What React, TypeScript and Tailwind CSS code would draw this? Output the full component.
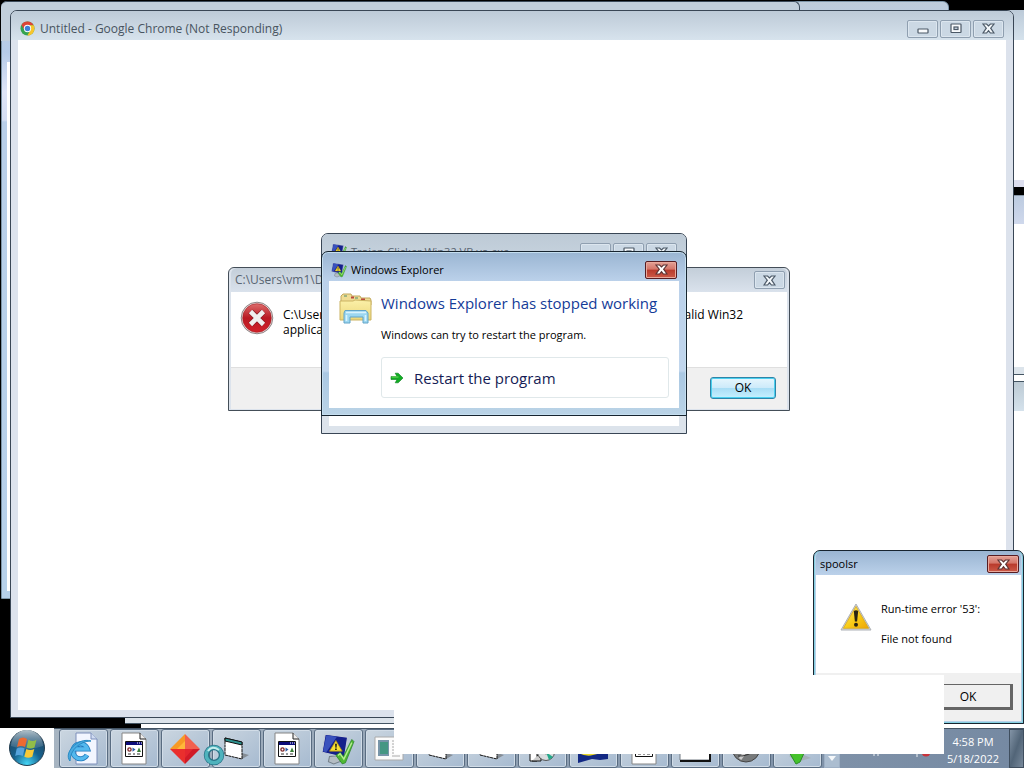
import type { ReactNode } from "react";

function CloseGlyph({ light = false }: { light?: boolean }) {
  return (
    <svg width="13" height="11" viewBox="0 0 13 11" aria-hidden="true">
      <path
        d="M1 1h3.6l1.9 2 1.9-2H12L8.7 5.2 12 10H8.4L6.5 7.6 4.6 10H1l3.3-4.8z"
        fill={light ? "#fff" : "#f4f8fb"}
        stroke={light ? "#5e3434" : "#4b5866"}
        strokeWidth="1.2"
      />
    </svg>
  );
}

function MinimizeGlyph() {
  return (
    <svg width="12" height="11" viewBox="0 0 12 11" aria-hidden="true">
      <rect x="1" y="6" width="10" height="4" rx="0.5" fill="#f8fafc" stroke="#4b5866" strokeWidth="1.2" />
    </svg>
  );
}

function MaximizeGlyph() {
  return (
    <svg width="12" height="11" viewBox="0 0 12 11" aria-hidden="true">
      <rect x="1" y="1" width="10" height="8.5" rx="0.5" fill="#f8fafc" stroke="#4b5866" strokeWidth="1.2" />
      <rect x="4" y="4" width="4" height="2.5" fill="#cbd8e4" stroke="#4b5866" strokeWidth="1.2" />
    </svg>
  );
}

function CaptionButton({ label, children }: { label: string; children: ReactNode }) {
  return (
    <button
      aria-label={label}
      className="flex h-[18px] w-[31px] items-center justify-center rounded-[2px] border border-[#8f9fb0] bg-[#cbd8e4] shadow-[inset_0_0_0_1px_#dce6ef]"
    >
      {children}
    </button>
  );
}

function RedCloseButton() {
  return (
    <button
      aria-label="Close"
      className="flex h-[18px] w-[32px] items-center justify-center rounded-[2px] border border-[#571d22] bg-[linear-gradient(#e3a196_0%,#d47568_45%,#b83a2c_50%,#cd5a48_100%)] shadow-[inset_0_0_0_1px_#e9a99c]"
    >
      <CloseGlyph light />
    </button>
  );
}

function ChromeIcon() {
  return (
    <svg width="15" height="15" viewBox="0 0 16 16" aria-hidden="true">
      <circle cx="8" cy="8" r="7.5" fill="#35a352" />
      <path d="M1.5 4.2A7.5 7.5 0 0 1 14.6 4.5H8L5 9.8z" fill="#dc4437" />
      <path d="M14.6 4.5A7.5 7.5 0 0 1 7.8 15.5L11.2 9.7 10 4.5z" fill="#f7c52d" />
      <circle cx="8" cy="8" r="3.9" fill="#fff" />
      <circle cx="8" cy="8" r="2.9" fill="#3f7fd9" />
    </svg>
  );
}

function MonitorCheckIcon({ size = 16 }: { size?: number }) {
  return (
    <svg width={size} height={size} viewBox="0 0 32 32" aria-hidden="true">
      <path d="M8 23l10-1 2 5-8 3-5-2z" fill="#b4bdc4" stroke="#75808a" />
      <path d="M4 2l21 3-3 19L1 19z" fill="#14208c" stroke="#c3ccd8" />
      <path d="M5 3l10 1.5L5 19l-3-1z" fill="#3a52bd" />
      <path d="M14 8l6 10H8z" fill="#f9df31" stroke="#a78518" strokeWidth="0.7" />
      <path d="M13.3 11h1.6l-.3 3.8h-1zM13.3 15.6h1.5V17h-1.5z" fill="#111" />
      <path d="M14 22l4-3 3 4 8-16 2 2-8 20-3 1z" fill="#4fb833" stroke="#29802a" strokeWidth="0.7" />
      <path d="M16 22l2-1.5 3.5 5L29 10" fill="none" stroke="#b5ec93" strokeWidth="1.3" />
    </svg>
  );
}

function ErrorIcon() {
  return (
    <svg className="shrink-0" width="34" height="34" viewBox="0 0 34 34" aria-hidden="true">
      <defs>
        <linearGradient id="errorRed" x1="0" y1="0" x2="0" y2="1">
          <stop offset="0" stopColor="#dd6d6c" />
          <stop offset="0.5" stopColor="#b91922" />
          <stop offset="1" stopColor="#d2222a" />
        </linearGradient>
      </defs>
      <circle cx="17" cy="17" r="15.8" fill="#ead7d7" stroke="#827b7c" strokeWidth="0.9" />
      <circle cx="17" cy="17" r="14.3" fill="url(#errorRed)" stroke="#a41b22" strokeWidth="0.6" />
      <path d="M10.5 10.5l13 13M23.5 10.5l-13 13" stroke="#851820" strokeWidth="6" />
      <path d="M10.5 10.5l13 13M23.5 10.5l-13 13" stroke="#f0f0ee" strokeWidth="4.6" />
    </svg>
  );
}

function WarningIcon() {
  return (
    <svg className="shrink-0" width="32" height="29" viewBox="0 0 32 29" aria-hidden="true">
      <defs>
        <linearGradient id="warningYellow" x1="0" y1="0" x2="1" y2="1">
          <stop offset="0" stopColor="#fff178" />
          <stop offset="0.55" stopColor="#f8cb15" />
          <stop offset="1" stopColor="#eda407" />
        </linearGradient>
      </defs>
      <path d="M16 1L31 27H1z" fill="#d6d8d9" stroke="#aeb2b7" strokeLinejoin="round" />
      <path d="M16 3.4L28.7 25.3H3.3z" fill="url(#warningYellow)" stroke="#d7a618" strokeWidth="0.8" />
      <path d="M13.8 8q2.2-1.6 4.4 0L17.1 18.5h-2.2z" fill="#282413" />
      <circle cx="16" cy="21.8" r="2" fill="#282413" />
    </svg>
  );
}

function FolderIcon() {
  return (
    <svg className="shrink-0" width="34" height="32" viewBox="0 0 34 32" aria-hidden="true">
      <defs>
        <linearGradient id="folder" x1="0" y1="0" x2="0" y2="1">
          <stop offset="0" stopColor="#fbf0a8" />
          <stop offset="1" stopColor="#ecd77a" />
        </linearGradient>
      </defs>
      <path d="M2 3l2-2h8l1 2h8l1 2h9l1 2v5H2z" fill="#efdc94" stroke="#c1a85c" />
      <path d="M12 4.5h3M22 6.5h4" stroke="#ba473c" strokeWidth="2" />
      <path d="M5 3h3M16 5h3" stroke="#4f8d6b" />
      <path d="M1 8h13l2-1 16 1v19H1z" fill="url(#folder)" stroke="#cbb362" />
      <path d="M6 17.5h21l2 2.5v10h-5v-6H11v6H5V20z" fill="#9cd7f0" stroke="#62a4c8" />
      <path d="M7 19.5h20M7.5 22v6M26.5 22v6" stroke="#daf3fd" strokeWidth="1.6" />
    </svg>
  );
}

function ArrowIcon() {
  return (
    <svg width="14" height="12" viewBox="0 0 14 12" aria-hidden="true">
      <path d="M1 4.5h6L5.2 1.2h3L13 6l-4.8 4.8h-3L7 7.5H1z" fill="#12ad24" stroke="#087f1d" strokeWidth="0.6" />
      <path d="M1.5 5h7" stroke="#72e05c" />
    </svg>
  );
}

function StartOrb() {
  return (
    <svg width="38" height="38" viewBox="0 0 38 38" aria-hidden="true">
      <defs>
        <radialGradient id="orb" cx="0.5" cy="0.95" r="0.9">
          <stop offset="0" stopColor="#45d5f5" />
          <stop offset="0.45" stopColor="#16628f" />
          <stop offset="1" stopColor="#23445f" />
        </radialGradient>
        <linearGradient id="gloss" x1="0" y1="0" x2="0" y2="1">
          <stop offset="0" stopColor="#d6e3e9" stopOpacity="0.8" />
          <stop offset="1" stopColor="#7797ad" stopOpacity="0.25" />
        </linearGradient>
      </defs>
      <circle cx="19" cy="19" r="17.5" fill="url(#orb)" stroke="#243e50" />
      <path d="M3 17a16 16 0 0 1 32 0q-16 6-32 0" fill="url(#gloss)" />
      <path d="M11 10q4-3 8 0l-2 8q-4-2-8 0z" fill="#ed6a31" />
      <path d="M20.5 10.5q4 3 8 0l-2 8q-4 2-8 0z" fill="#91bd49" />
      <path d="M8.7 19.5q4-2 8 0l-2 7.5q-4-2-7.5 0z" fill="#56a3dc" />
      <path d="M18.3 20q4 2 8 0l-2 7.7q-4 2-8 0z" fill="#f8c936" />
    </svg>
  );
}

function ExplorerIcon() {
  return (
    <svg width="32" height="34" viewBox="0 0 32 34" aria-hidden="true">
      <path d="M9 1h15l6 6v25H9z" fill="#f2f6ff" stroke="#7d8fba" />
      <path d="M24 1v6h6" fill="#cfdbf1" stroke="#7d8fba" />
      <path d="M20 23a7.5 7.5 0 1 1 .6-6H7" fill="none" stroke="#217abd" strokeWidth="5" />
      <path d="M20 23a7.5 7.5 0 1 1 .6-6H7" fill="none" stroke="#54b9ee" strokeWidth="3.4" />
      <path d="M3 29C-4 21 11 5 24 9 13 9 3 18 3 29" fill="#4ba9df" stroke="#278bc4" />
    </svg>
  );
}

function DocumentIcon() {
  return (
    <svg width="28" height="34" viewBox="0 0 28 34" aria-hidden="true">
      <path d="M2 1h18l6 6v25H2z" fill="#fff" stroke="#858585" />
      <path d="M20 1v6h6" fill="#eee" stroke="#222" />
      <path d="M5.5 9.5h17v15h-17z" fill="#fff" stroke="#111" />
      <path d="M6 10h16v3H6z" fill="#0b0b79" />
      <path d="M17 11h1M19 11h1M21 11h1" stroke="#fff" />
      <circle cx="9.5" cy="17.5" r="1.6" fill="none" stroke="#812b2b" strokeWidth="1.4" />
      <path d="M12.5 15.5l3 2-3 2.3z" fill="#2b5ba8" />
      <path d="M17 20l2-4.5 2 4.5z" fill="#397d36" />
      <path d="M8 22h3M13 22h2M17 22h3" stroke="#333" />
    </svg>
  );
}

function DiamondIcon() {
  return (
    <svg width="32" height="32" viewBox="0 0 32 32" aria-hidden="true">
      <path d="M16 1v15H1z" fill="#f79a25" />
      <path d="M16 1l15 15H16z" fill="#f2604e" />
      <path d="M1 16h15v15z" fill="#ea2f2d" />
      <path d="M16 16h15L16 31z" fill="#d01a27" />
      <path d="M16 8v8H8z" fill="#ffb83a" />
      <path d="M16 16h8l-8 9z" fill="#e3262f" />
    </svg>
  );
}

function FormIcon() {
  return (
    <svg width="32" height="30" viewBox="0 0 32 30" aria-hidden="true">
      <path d="M22 19l7 2-7 4z" fill="#858d95" />
      <path d="M5 4l17 4v17L5 21z" fill="#fff" stroke="#111" strokeDasharray="3 0.5" />
      <path d="M5 4l17 4v3L5 7z" fill="#2d9290" stroke="#111" />
    </svg>
  );
}

function ReportIcon() {
  return (
    <svg width="30" height="27" viewBox="0 0 30 27" aria-hidden="true">
      <path d="M1 2h28v23H1z" fill="#fbfbfb" stroke="#aaa" />
      <path d="M4 5h11v16H4z" fill="#7795a9" />
      <path d="M6 7h8v12H6z" fill="#459783" />
      <path d="M18 6h8M18 9h8M18 12h8M18 15h8M18 18h8M18 21h8" stroke="#aaa" />
    </svg>
  );
}

function DiscIcon() {
  return (
    <svg width="30" height="30" viewBox="0 0 30 30" aria-hidden="true">
      <path d="M3 8h7v19H3z" fill="#fff" stroke="#111" />
      <path d="M10 22l4-3v8H5" fill="#ccc" stroke="#111" />
      <circle cx="19" cy="18" r="8.5" fill="#d9dddf" stroke="#555" />
      <path d="M19 18l3 8 4-3z" fill="#24a98a" />
      <circle cx="19" cy="18" r="2" fill="#fff" stroke="#777" />
    </svg>
  );
}

function BlueFlagIcon() {
  return (
    <svg width="34" height="32" viewBox="0 0 34 32" aria-hidden="true">
      <path d="M2 5h30v21l-8 1-8-1-7 2-7 2z" fill="#132984" />
      <path d="M2 17q8 3 15 1t15 0v3q-9-1-15 1T2 20z" fill="#e9d728" />
    </svg>
  );
}

function WindowIcon() {
  return (
    <svg width="34" height="30" viewBox="0 0 34 30" aria-hidden="true">
      <path d="M2 3h30v23H2z" fill="#fff" stroke="#737b82" />
      <path d="M2 27h30V4" fill="none" stroke="#111" strokeWidth="2" />
    </svg>
  );
}

function GlobeIcon() {
  return (
    <svg width="32" height="32" viewBox="0 0 32 32" aria-hidden="true">
      <circle cx="16" cy="15" r="14" fill="#777a7b" stroke="#444" />
      <path d="M5 18q10 2 22-10M10 26l9-12 9 5" fill="none" stroke="#ccc" strokeWidth="3" />
      <path d="M8 23q10 1 20-8" fill="none" stroke="#333" />
    </svg>
  );
}

function GreenCheckIcon() {
  return (
    <svg width="32" height="32" viewBox="0 0 32 32" aria-hidden="true">
      <path d="M8 23l8-4 14 6-14 4z" fill="#a5afb9" />
      <path d="M8 19l5-3 3 4 8-14 4 3-9 20-4 2z" fill="#45c22c" stroke="#2c8c27" />
    </svg>
  );
}

function BusyRing() {
  return (
    <svg width="22" height="22" viewBox="0 0 22 22" aria-hidden="true">
      <circle cx="11" cy="11" r="7.5" fill="none" stroke="#2a7589" strokeWidth="5.5" />
      <circle cx="11" cy="11" r="7.8" fill="none" stroke="#4fb3bd" strokeWidth="3.4" />
      <path d="M5 7q4-6 11-1" fill="none" stroke="#c6eeee" strokeWidth="2" />
    </svg>
  );
}

const tasks: { name: string; icon: ReactNode }[] = [
  { name: "Internet Explorer", icon: <ExplorerIcon /> },
  { name: "Program", icon: <DocumentIcon /> },
  { name: "Diamond", icon: <DiamondIcon /> },
  { name: "Form", icon: <FormIcon /> },
  { name: "Program 2", icon: <DocumentIcon /> },
  { name: "Windows Explorer", icon: <MonitorCheckIcon size={34} /> },
  { name: "Report", icon: <ReportIcon /> },
  { name: "Form 2", icon: <FormIcon /> },
  { name: "Form 3", icon: <FormIcon /> },
  { name: "Installer", icon: <DiscIcon /> },
  { name: "Flag", icon: <BlueFlagIcon /> },
  { name: "Program 3", icon: <DocumentIcon /> },
  { name: "Window", icon: <WindowIcon /> },
  { name: "Globe", icon: <GlobeIcon /> },
  { name: "Checker", icon: <GreenCheckIcon /> },
];

function BackgroundWindows() {
  return (
    <>
      <div className="absolute top-px left-px h-[598px] w-[948px] rounded-t-md border border-[#7d95a8] bg-[linear-gradient(#bfcddb_0px,#b5cbe8_50px,#dfe5f7_90px,#d5def3_118px,#b9cfe9_120px,#b7d1ea_100%)] pt-[60px] pr-[7px] pb-[7px] pl-[5px]">
        <div className="h-full bg-white" />
      </div>
      <div className="absolute top-px left-px h-10 w-[799px] rounded-t-md border-t border-r border-[#3b4a5a] bg-[#c1cedb]" />
      <div className="absolute top-2.5 right-0 bottom-10 flex w-6 flex-col bg-white">
        <div className="h-[30px] bg-linear-to-b from-[#bccad8] to-[#d5e2ec]" />
        <div className="h-[140px]" />
        <div className="h-[7px] bg-[#dddfef]" />
        <div className="h-[9px] border-b border-[#8796a6] bg-black" />
        <div className="h-7 bg-linear-to-b from-[#bccbe0] to-[#cfd8ec]" />
        <div className="h-[143px]" />
        <div className="h-[7px] bg-[#dce4eb]" />
        <div className="h-2 border-y border-[#435462]" />
        <div className="h-[29px] bg-linear-to-b from-[#bccad4] to-[#d5e2ec]" />
      </div>
      <div className="absolute right-0 bottom-10 left-[125px] h-[11px] bg-black">
        <div className="h-[7px] border-b border-[#435462] bg-[#dce3ea]" />
        <div className="ml-4 h-1 bg-white" />
      </div>
    </>
  );
}

function BrowserWindow() {
  return (
    <section className="absolute inset-x-2.5 top-2.5 bottom-[50px] flex flex-col rounded-t-[7px] border border-[#394655] bg-[#dce2ec] px-[7px] pb-[7px]">
      <header className="-mx-[7px] flex h-[29px] shrink-0 items-center justify-between rounded-t-md bg-linear-to-b from-[#bdcad7] to-[#d7e3ed] px-[9px] pt-1.5">
        <div className="flex items-center gap-[5px]">
          <ChromeIcon />
          <h1 className="text-[12px] leading-4 text-[#485460]">Untitled - Google Chrome (Not Responding)</h1>
        </div>
        <div className="flex gap-0.5">
          <CaptionButton label="Minimize"><MinimizeGlyph /></CaptionButton>
          <CaptionButton label="Maximize"><MaximizeGlyph /></CaptionButton>
          <CaptionButton label="Close"><CloseGlyph /></CaptionButton>
        </div>
      </header>
      <div className="grow bg-white" />
    </section>
  );
}

function Win32ErrorDialog() {
  return (
    <section className="absolute top-[267px] left-[228px] flex h-[144px] w-[562px] flex-col rounded-t-md border border-[#444e58] bg-[#dce3ec] px-0.5 pb-px">
      <header className="flex h-6 shrink-0 items-center justify-between rounded-t-md bg-linear-to-b from-[#c3ced9] to-[#dae2ec] pr-0.5 pl-1">
        <h2 className="text-[12px] leading-4 text-[#596572]">C:\Users\vm1\D</h2>
        <CaptionButton label="Close"><CloseGlyph /></CaptionButton>
      </header>
      <div className="flex h-[75px] shrink-0 gap-[9px] bg-white pt-[9px] pr-11 pl-[9px] text-[12px] leading-[15px]">
        <ErrorIcon />
        <p className="grow pt-1.5">
          <span className="flex justify-between"><span>C:\Users</span><span>valid Win32</span></span>
          application.
        </p>
      </div>
      <footer className="flex grow items-center justify-end border-t border-[#dfdfdf] bg-[#f0f0f0] pr-[11px] pb-0.5">
        <button className="h-[22px] w-[66px] rounded-[3px] border border-[#2e84a8] bg-[linear-gradient(#e7f6fd,#cceafa_50%,#a9ddf5_52%,#c6f1ff)] text-[12px] leading-4 shadow-[inset_0_0_0_1px_#4bd0ef]">
          OK
        </button>
      </footer>
    </section>
  );
}

function ProgramWindow() {
  return (
    <section className="absolute top-[233px] left-[321px] flex h-[201px] w-[366px] flex-col rounded-t-[7px] border border-[#394655] bg-[#dce3eb] px-[7px] pb-[7px]">
      <header className="-mx-[7px] flex h-8 shrink-0 justify-between rounded-t-md bg-linear-to-b from-[#bdcad6] to-[#c9d5e0] px-[9px] pt-[9px]">
        <div className="flex gap-1">
          <MonitorCheckIcon />
          <h2 className="text-[11px] leading-[18px] text-[#596572]">Trojan-Clicker.Win32.VB.vo.exe</h2>
        </div>
        <div className="flex gap-0.5">
          <CaptionButton label="Minimize"><MinimizeGlyph /></CaptionButton>
          <CaptionButton label="Maximize"><MaximizeGlyph /></CaptionButton>
          <CaptionButton label="Close"><CloseGlyph /></CaptionButton>
        </div>
      </header>
      <div className="grow bg-white" />
    </section>
  );
}

function StoppedWorkingDialog() {
  return (
    <section className="absolute top-[251px] left-[321px] flex h-[165px] w-[366px] flex-col rounded-t-[7px] border border-[#17242f] bg-[linear-gradient(#9ab5d2_0px,#bbd1ea_29px,#c1d6ed_119px,#aac8e3_121px,#bad3e6_100%)] px-[7px] pb-[7px] shadow-[inset_0_0_0_1px_#c5deef]">
      <header className="flex h-[29px] shrink-0 items-center justify-between px-0.5 pt-1.5">
        <div className="flex items-center gap-1">
          <MonitorCheckIcon />
          <h2 className="text-[11px] leading-4">Windows Explorer</h2>
        </div>
        <RedCloseButton />
      </header>
      <div className="flex grow items-start gap-2 bg-white px-[10px] pt-3">
        <FolderIcon />
        <div className="flex grow flex-col">
          <h3 className="text-[15px] leading-5 whitespace-nowrap text-[#143b98]">Windows Explorer has stopped working</h3>
          <p className="mt-3.5 text-[11px] leading-4">Windows can try to restart the program.</p>
          <button className="mt-3.5 flex h-[41px] w-full items-center gap-2.5 rounded-[3px] border border-[#e0e8ea] px-2 text-[15px] leading-5 text-[#151c55]">
            <ArrowIcon />
            Restart the program
          </button>
        </div>
      </div>
    </section>
  );
}

function RuntimeErrorDialog() {
  return (
    <section className="absolute right-0 bottom-11 flex h-[174px] w-[211px] flex-col rounded-t-[7px] border border-[#17242f] bg-[#b9d1e9] px-0.5 pb-0.5 shadow-[inset_0_0_0_1px_#85d0e1]">
      <header className="flex h-6 shrink-0 items-center justify-between rounded-t-md bg-linear-to-b from-[#9ab5d2] to-[#bbd1ea] px-0.5 pt-0.5 pl-1">
        <h2 className="text-[11px] leading-4">spoolsr</h2>
        <RedCloseButton />
      </header>
      <div className="flex h-[98px] shrink-0 gap-[9px] bg-white pt-[26px] pl-6 text-[11px] leading-[15px]">
        <div className="pt-0.5"><WarningIcon /></div>
        <div className="flex flex-col gap-[15px]">
          <p>Run-time error '53':</p>
          <p>File not found</p>
        </div>
      </div>
      <footer className="flex grow items-start justify-end bg-[#f0f0f0] pt-[11px] pr-2">
        <button className="h-[26px] w-[88px] border border-r-[3px] border-b-[3px] border-[#656565] bg-[#f0f0f0] pt-0.5 text-[12px] leading-4">OK</button>
      </footer>
    </section>
  );
}

function Taskbar() {
  return (
    <nav className="absolute inset-x-0 bottom-0 flex h-10 overflow-hidden bg-linear-to-r from-[#aab7c3] to-[#7589a2]">
      <button aria-label="Start" className="flex w-[54px] shrink-0 items-center justify-center bg-white">
        <StartOrb />
      </button>
      <div className="flex grow border-t border-[#435363] pl-[5px]">
        <div className="flex gap-0.5">
          {tasks.map((task) => (
            <button
              key={task.name}
              aria-label={task.name}
              className="flex h-[39px] w-[49px] shrink-0 items-center justify-center rounded-[3px] border border-[#596c81] bg-linear-to-br from-[#cbd6e0] to-[#a6bad0] pr-0.5 shadow-[inset_0_0_0_1px_#d1dce7]"
            >
              {task.icon}
            </button>
          ))}
          <button aria-label="More windows" className="flex h-[39px] w-4 items-end justify-center border border-[#9dafc4] bg-[#abbdd0] pb-1.5">
            <svg width="8" height="5" viewBox="0 0 8 5" aria-hidden="true"><path d="M0 0h8L4 5z" fill="#f5f8fa" /></svg>
          </button>
        </div>
        <div className="flex grow items-end justify-end pr-1.5 pb-2.5">
          <svg width="60" height="12" viewBox="0 0 60 12" aria-hidden="true">
            <path d="M3 3v7M7 3v7M46 2v9" stroke="#eef2f5" />
            <circle cx="55" cy="6" r="4.5" fill="#c9333b" />
            <path d="M53 4l4 4M57 4l-4 4" stroke="#fff" />
          </svg>
        </div>
        <div className="flex w-[72px] shrink-0 flex-col items-center pt-1 text-[11px] leading-[17px] text-white">
          <time>4:58 PM</time>
          <time>5/18/2022</time>
        </div>
        <button aria-label="Show desktop" className="w-[15px] shrink-0 border border-[#3f4e5e] bg-linear-to-br from-[#8394a6] via-[#526578] to-[#78899b]" />
      </div>
    </nav>
  );
}

export default function App() {
  return (
    <main className="relative h-screen w-full overflow-hidden bg-black font-['Open_Sans','Noto_Sans',sans-serif] text-black">
      <BackgroundWindows />
      <BrowserWindow />
      <Win32ErrorDialog />
      <ProgramWindow />
      <StoppedWorkingDialog />
      <RuntimeErrorDialog />
      <Taskbar />
      <div className="absolute right-20 bottom-3.5 left-[394px] h-11 bg-white" />
      <div className="absolute right-20 bottom-3.5 h-[79px] w-[131px] bg-white" />
      <div className="absolute bottom-0.5 left-[203px]"><BusyRing /></div>
    </main>
  );
}
